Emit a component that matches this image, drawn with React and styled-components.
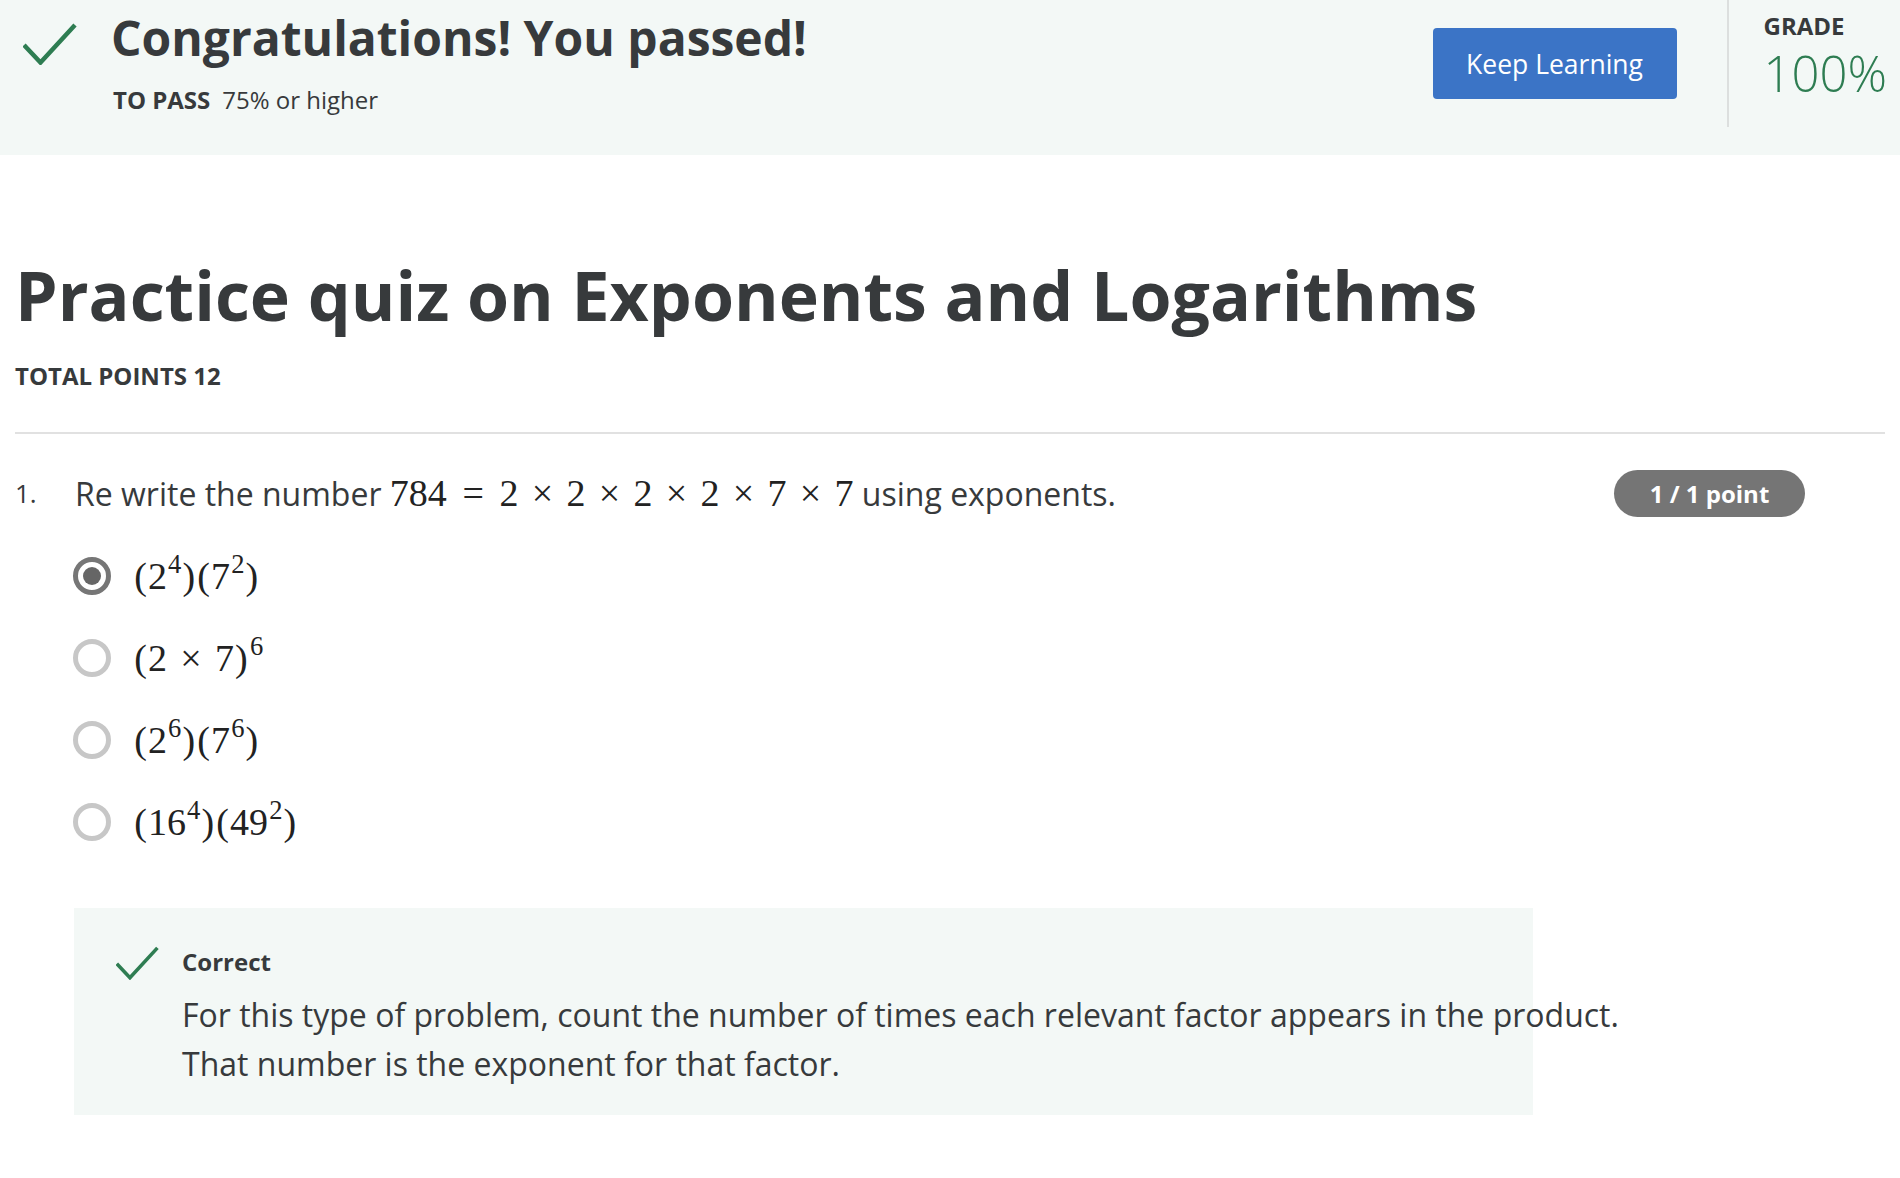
import React from 'react';
import styled, { createGlobalStyle } from 'styled-components';

const GlobalStyle = createGlobalStyle`
	body{
		margin: 0;
		background: #FFFFFF;
		font-family: 'Open Sans', 'Liberation Sans', sans-serif;
		color: #373a3c;
	}
`;

const Header = styled.header`
	display: flex;
	align-items: flex-start;
	height: 155px;
	padding: 0 13px 0 23px;
	background: #f3f8f6;
	box-sizing: border-box;
`;

const HeaderText = styled.div`
	margin-left: 34px;
	padding-top: 10px;
	flex: 1;

	.title{
		font-size: 48px;
		font-weight: 700;
		line-height: 55px;
	}

	.pass{
		margin-top: 17px;
		margin-left: 2px;
		font-size: 24px;
		line-height: 1.5;

		b{
			font-weight: 700;
			margin-right: 12px;
		}
	}
`;

const KeepButton = styled.button`
	margin-top: 28px;
	width: 244px;
	height: 71px;
	border: none;
	border-radius: 4px;
	background: #3b74c6;
	color: #FFFFFF;
	font-family: 'Open Sans', sans-serif;
	font-size: 26.5px;
	cursor: pointer;
`;

const Grade = styled.div`
	margin-left: 50px;
	height: 127px;
	padding-left: 35px;
	border-left: 2px solid #dcdfde;
	box-sizing: border-box;

	.label{
		padding-top: 12px;
		font-size: 24px;
		font-weight: 700;
		line-height: 1.2;
	}

	.value{
		margin-top: 5px;
		font-size: 49px;
		font-weight: 300;
		line-height: 55px;
		color: #2e7d52;
	}
`;

const Main = styled.main`
	padding: 0 15px;
`;

const QuizTitle = styled.h1`
	margin: 102px 0 0;
	font-size: 68px;
	font-weight: 700;
	line-height: 76px;
`;

const TotalPoints = styled.div`
	margin-top: 25px;
	font-size: 24px;
	font-weight: 700;
	line-height: 1.5;
`;

const Divider = styled.hr`
	margin: 38px 0 0;
	border: none;
	border-top: 2px solid #e1e1e1;
`;

const QuestionRow = styled.div`
	display: flex;
	align-items: center;
	margin-top: 36px;
	padding-right: 80px;
	font-size: 32px;
	line-height: 45px;

	.num{
		width: 60px;
		font-size: 26px;
	}

	.text{
		flex: 1;
	}
`;

const PointBadge = styled.div`
	width: 191px;
	height: 47px;
	border-radius: 24px;
	background: #757575;
	color: #FFFFFF;
	font-size: 24px;
	font-weight: 700;
	line-height: 47px;
	text-align: center;
`;

const Options = styled.div`
	margin: 18px 0 0 58px;
`;

const Option = styled.label`
	display: flex;
	align-items: center;
	height: 82px;
	gap: 22px;
`;

const Radio = styled.span`
	width: 38px;
	height: 38px;
	border-radius: 50%;
	border: 5px solid ${p => p.checked ? '#767676' : '#c7c7c7'};
	box-sizing: border-box;
	display: flex;
	align-items: center;
	justify-content: center;

	&::after{
		content: '';
		display: ${p => p.checked ? 'block' : 'none'};
		width: 18px;
		height: 18px;
		border-radius: 50%;
		background: #666666;
	}
`;

const MathText = styled.span`
	font-family: 'Liberation Serif', 'DejaVu Serif', serif;
	font-size: 38px;
	color: #222222;
	white-space: nowrap;
`;

const Sup = styled.sup`
	font-size: 0.7em;
	vertical-align: 0.6em;
	line-height: 0;
	margin-left: 0.04em;
`;

const Paren = styled.span`
	padding: 0 0.03em;
`;

const Op = styled.span`
	margin: 0 0.35em;
`;

const Rel = styled.span`
	margin: 0 0.41em;
`;

const Feedback = styled.div`
	display: flex;
	align-items: flex-start;
	width: 1459px;
	margin: 45px 0 60px 59px;
	padding: 36px 0 27px 42px;
	background: #f3f8f6;
	box-sizing: border-box;

	svg{
		margin-top: 2px;
		flex-shrink: 0;
	}

	.body{
		margin-left: 23px;
	}

	.label{
		font-size: 24px;
		font-weight: 700;
		line-height: 1.5;
	}

	.explain{
		margin-top: 10px;
		font-size: 32px;
		line-height: 49px;
		white-space: nowrap;
	}
`;

function Check({ w, h }){
	return(
		<svg width={w} height={h} viewBox='0 0 54 42'>
			<polyline points='1,22 17.5,39.5 52,2' fill='none' stroke='#2e7d52' strokeWidth='4.5'/>
		</svg>
	);
}

function Group({ children }){
	return <><Paren>(</Paren>{children}<Paren>)</Paren></>;
}

function Pow({ base, exp }){
	return <span>{base}<Sup>{exp}</Sup></span>;
}

const options = [
	{ checked: true, math: <><Group><Pow base='2' exp='4'/></Group><Group><Pow base='7' exp='2'/></Group></> },
	{ checked: false, math: <><Group>2<Op>×</Op>7</Group><Sup>6</Sup></> },
	{ checked: false, math: <><Group><Pow base='2' exp='6'/></Group><Group><Pow base='7' exp='6'/></Group></> },
	{ checked: false, math: <><Group><Pow base='16' exp='4'/></Group><Group><Pow base='49' exp='2'/></Group></> },
];

export default function App(){
	return(
		<>
			<GlobalStyle/>
			<Header>
				<div style={{ marginTop: 23 }}><Check w={54} h={42}/></div>
				<HeaderText>
					<div className='title'>Congratulations! You passed!</div>
					<div className='pass'><b>TO PASS</b>75% or higher</div>
				</HeaderText>
				<KeepButton>Keep Learning</KeepButton>
				<Grade>
					<div className='label'>GRADE</div>
					<div className='value'>100%</div>
				</Grade>
			</Header>
			<Main>
				<QuizTitle>Practice quiz on Exponents and Logarithms</QuizTitle>
				<TotalPoints>TOTAL POINTS 12</TotalPoints>
				<Divider/>
				<QuestionRow>
					<div className='num'>1.</div>
					<div className='text'>
						Re write the number <MathText>784<Rel>=</Rel>2<Op>×</Op>2<Op>×</Op>2<Op>×</Op>2<Op>×</Op>7<Op>×</Op>7</MathText> using exponents.
					</div>
					<PointBadge>1 / 1 point</PointBadge>
				</QuestionRow>
				<Options>
					{options.map((o, i) => (
						<Option key={i}>
							<Radio checked={o.checked}/>
							<MathText>{o.math}</MathText>
						</Option>
					))}
				</Options>
				<Feedback>
					<Check w={43} h={34}/>
					<div className='body'>
						<div className='label'>Correct</div>
						<div className='explain'>
							For this type of problem, count the number of times each relevant factor appears in the product.<br/>
							That number is the exponent for that factor.
						</div>
					</div>
				</Feedback>
			</Main>
		</>
	);
}
